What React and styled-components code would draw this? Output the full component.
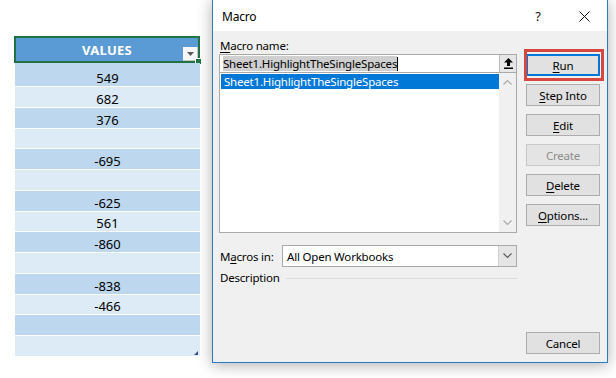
import React from "react";
import styled, { createGlobalStyle } from "styled-components";

const GlobalStyle = createGlobalStyle`
  html, body {
    margin: 0;
    padding: 0;
    background: #fff;
  }
  body {
    width: 616px;
    height: 378px;
    overflow: hidden;
    font-family: "Noto Sans", "Open Sans", sans-serif;
  }
`;

const Screen = styled.div`
  display: flex;
  align-items: flex-start;
  width: 616px;
  height: 378px;
  overflow: hidden;
  background: #fff;
`;

/* ---------- spreadsheet ---------- */

const Sheet = styled.div`
  width: 212px;
  flex-shrink: 0;
  box-sizing: border-box;
  padding: 36px 0 0 14px;
  font-family: "Noto Sans", sans-serif;
  font-size: 13px;
`;

const HeaderCell = styled.div`
  position: relative;
  width: 186px;
  height: 27px;
  box-sizing: border-box;
  border: 2px solid #217346;
  background: #5b9bd5;
  color: #fff;
  font-weight: 700;
  display: flex;
  align-items: center;
  justify-content: center;
  padding-top: 1px;
  letter-spacing: 0.3px;
`;

const FilterButton = styled.div`
  position: absolute;
  right: 0;
  bottom: 0;
  width: 15px;
  height: 14px;
  box-sizing: border-box;
  background: #f7f7f7;
  border-right: 1px solid #c6c6c6;
  border-bottom: 1px solid #c6c6c6;
  display: flex;
  align-items: center;
  justify-content: center;
`;

const FillHandle = styled.div`
  position: absolute;
  right: -4px;
  bottom: -4px;
  width: 5px;
  height: 5px;
  background: #217346;
  border: 1px solid #fff;
`;

const Rows = styled.div`
  position: relative;
  margin-left: 1px;
  width: 185px;
  height: 294px;
  display: grid;
  grid-template-rows: 24px repeat(13, 1fr);
`;

const Row = styled.div`
  box-sizing: border-box;
  background: ${(p) => (p.$dark ? "#bdd7ee" : "#ddebf7")};
  border-bottom: 1px solid #fff;
  display: flex;
  align-items: flex-end;
  justify-content: center;
  padding-bottom: 1px;
  line-height: 1;
  color: #000;
`;

const ResizeMark = styled.div`
  position: absolute;
  right: 2px;
  bottom: 2px;
  width: 0;
  height: 0;
  border-left: 4px solid transparent;
  border-bottom: 4px solid #3a4f8a;
`;

/* ---------- dialog ---------- */

const Dialog = styled.div`
  width: 396px;
  height: 364px;
  margin-top: -1px;
  flex-shrink: 0;
  box-sizing: border-box;
  border: 1px solid #2b7cc6;
  background: #f0f0f0;
  box-shadow: 0 2px 14px rgba(0, 0, 0, 0.32);
  display: flex;
  flex-direction: column;
  font-size: 11.5px;
  letter-spacing: -0.2px;
  color: #000;
`;

const TitleBar = styled.div`
  height: 31px;
  flex-shrink: 0;
  background: #fff;
  display: flex;
  align-items: center;
  padding-left: 9px;
  padding-top: 1px;
  box-sizing: border-box;
`;

const Title = styled.div`
  flex: 1;
  font-size: 12px;
`;

const TitleIcon = styled.div`
  width: 46px;
  height: 30px;
  display: flex;
  align-items: center;
  justify-content: center;
  font-size: 13px;
  color: #111;
`;

const Body = styled.div`
  flex: 1;
  display: flex;
  padding: 7px 7px 8px 6px;
`;

const LeftPane = styled.div`
  width: 298px;
  display: flex;
  flex-direction: column;
`;

const Label = styled.div`
  height: 16px;
  line-height: 16px;
  padding-left: 1px;
  white-space: nowrap;
`;

const Key = styled.span`
  text-decoration: underline;
  text-underline-offset: 2px;
`;

const NameField = styled.div`
  height: 19px;
  box-sizing: border-box;
  border: 1px solid #a9a9a9;
  background: #fff;
  display: flex;
`;

const NameText = styled.div`
  flex: 1;
  display: flex;
  align-items: center;
  padding-left: 3px;
`;

const Selected = styled.span`
  background: #cfcfcf;
  line-height: 15px;
`;

const Caret = styled.span`
  width: 1px;
  height: 14px;
  background: #000;
`;

const UpButton = styled.div`
  width: 17px;
  box-sizing: border-box;
  border-left: 1px solid #bcbcbc;
  background: #e6e6e6;
  display: flex;
  align-items: center;
  justify-content: center;
`;

const ListBox = styled.div`
  height: 160px;
  box-sizing: border-box;
  border: 1px solid #a9a9a9;
  border-top: none;
  background: #fff;
  display: flex;
`;

const Items = styled.div`
  flex: 1;
  padding: 1px 0 0 1px;
`;

const Item = styled.div`
  height: 15px;
  line-height: 15px;
  padding-left: 3px;
  background: ${(p) => (p.$active ? "#0078d7" : "transparent")};
  color: ${(p) => (p.$active ? "#fff" : "#000")};
`;

const ScrollBar = styled.div`
  width: 17px;
  background: #f0f0f0;
  display: flex;
  flex-direction: column;
  justify-content: space-between;
  align-items: center;
  padding: 6px 0;
`;

const FieldRow = styled.div`
  display: flex;
  align-items: center;
  margin-top: ${(p) => p.$gap}px;
`;

const RowLabel = styled.div`
  width: 62px;
  padding-left: 1px;
  white-space: nowrap;
`;

const SelectBox = styled.div`
  flex: 1;
  height: 22px;
  box-sizing: border-box;
  border: 1px solid #a9a9a9;
  background: #fff;
  display: flex;
`;

const SelectText = styled.div`
  flex: 1;
  display: flex;
  align-items: center;
  padding-left: 4px;
`;

const DropButton = styled.div`
  width: 17px;
  background: #e5e5e5;
  border-left: 1px solid #cfcfcf;
  display: flex;
  align-items: center;
  justify-content: center;
`;

const GroupLine = styled.div`
  flex: 1;
  height: 0;
  border-top: 1px solid #dcdcdc;
  margin-left: 6px;
`;

const RightPane = styled.div`
  width: 74px;
  margin-left: 9px;
  padding-top: 16px;
  display: flex;
  flex-direction: column;
  gap: 8px;
`;

const Button = styled.div`
  position: relative;
  height: 22px;
  box-sizing: border-box;
  border: 1px solid ${(p) => (p.$disabled ? "#c8c8c8" : p.$default ? "#0078d7" : "#adadad")};
  box-shadow: ${(p) => (p.$default ? "inset 0 0 0 1px #0078d7" : "none")};
  background: ${(p) => (p.$disabled ? "#e4e4e4" : "#e1e1e1")};
  color: ${(p) => (p.$disabled ? "#8d8d8d" : "#000")};
  display: flex;
  align-items: center;
  justify-content: center;
  margin-top: ${(p) => (p.$bottom ? "auto" : "0")};
`;

const Highlight = styled.div`
  position: absolute;
  top: -6px;
  bottom: -6px;
  left: -3px;
  right: -5px;
  border: 3px solid #d6473f;
  pointer-events: none;
`;

const values = ["549", "682", "376", "", "-695", "", "-625", "561", "-860", "", "-838", "-466", "", ""];

const Chevron = ({ up, color = "#a6a6a6" }) => (
  <svg width="9" height="6" viewBox="0 0 9 6">
    <path
      d={up ? "M0.5 5.5 L4.5 1.5 L8.5 5.5" : "M0.5 0.5 L4.5 4.5 L8.5 0.5"}
      fill="none"
      stroke={color}
      strokeWidth="1.1"
    />
  </svg>
);

const App = () => {
  return (
    <>
      <GlobalStyle />
      <Screen>
        <Sheet>
          <HeaderCell>
            VALUES
            <FilterButton>
              <svg width="7" height="4" viewBox="0 0 7 4">
                <path d="M0 0 H7 L3.5 4 Z" fill="#5a5a5a" />
              </svg>
            </FilterButton>
            <FillHandle />
          </HeaderCell>
          <Rows>
            {values.map((v, i) => (
              <Row key={i} $dark={i % 2 === 0}>
                {v}
              </Row>
            ))}
            <ResizeMark />
          </Rows>
        </Sheet>

        <Dialog>
          <TitleBar>
            <Title>Macro</Title>
            <TitleIcon>?</TitleIcon>
            <TitleIcon>
              <svg width="11" height="11" viewBox="0 0 11 11">
                <path d="M0.5 0.5 L10.5 10.5 M10.5 0.5 L0.5 10.5" stroke="#111" strokeWidth="1" />
              </svg>
            </TitleIcon>
          </TitleBar>
          <Body>
            <LeftPane>
              <Label>
                <Key>M</Key>acro name:
              </Label>
              <NameField>
                <NameText>
                  <Selected>Sheet1.HighlightTheSingleSpaces</Selected>
                  <Caret />
                </NameText>
                <UpButton>
                  <svg width="9" height="11" viewBox="0 0 9 11">
                    <path d="M4.5 0 L9 4.5 H6 V8 H3 V4.5 H0 Z" fill="#000" />
                    <rect x="0" y="9.5" width="9" height="1.5" fill="#000" />
                  </svg>
                </UpButton>
              </NameField>
              <ListBox>
                <Items>
                  <Item $active>Sheet1.HighlightTheSingleSpaces</Item>
                </Items>
                <ScrollBar>
                  <Chevron up />
                  <Chevron />
                </ScrollBar>
              </ListBox>
              <FieldRow $gap={12}>
                <RowLabel>
                  M<Key>a</Key>cros in:
                </RowLabel>
                <SelectBox>
                  <SelectText>All Open Workbooks</SelectText>
                  <DropButton>
                    <Chevron color="#555" />
                  </DropButton>
                </SelectBox>
              </FieldRow>
              <FieldRow $gap={3}>
                <Label>Description</Label>
                <GroupLine />
              </FieldRow>
            </LeftPane>
            <RightPane>
              <Button $default>
                <span>
                  <Key>R</Key>un
                </span>
                <Highlight />
              </Button>
              <Button>
                <span>
                  <Key>S</Key>tep Into
                </span>
              </Button>
              <Button>
                <span>
                  <Key>E</Key>dit
                </span>
              </Button>
              <Button $disabled>Create</Button>
              <Button>
                <span>
                  <Key>D</Key>elete
                </span>
              </Button>
              <Button>
                <span>
                  <Key>O</Key>ptions...
                </span>
              </Button>
              <Button $bottom>Cancel</Button>
            </RightPane>
          </Body>
        </Dialog>
      </Screen>
    </>
  );
};

export default App;
